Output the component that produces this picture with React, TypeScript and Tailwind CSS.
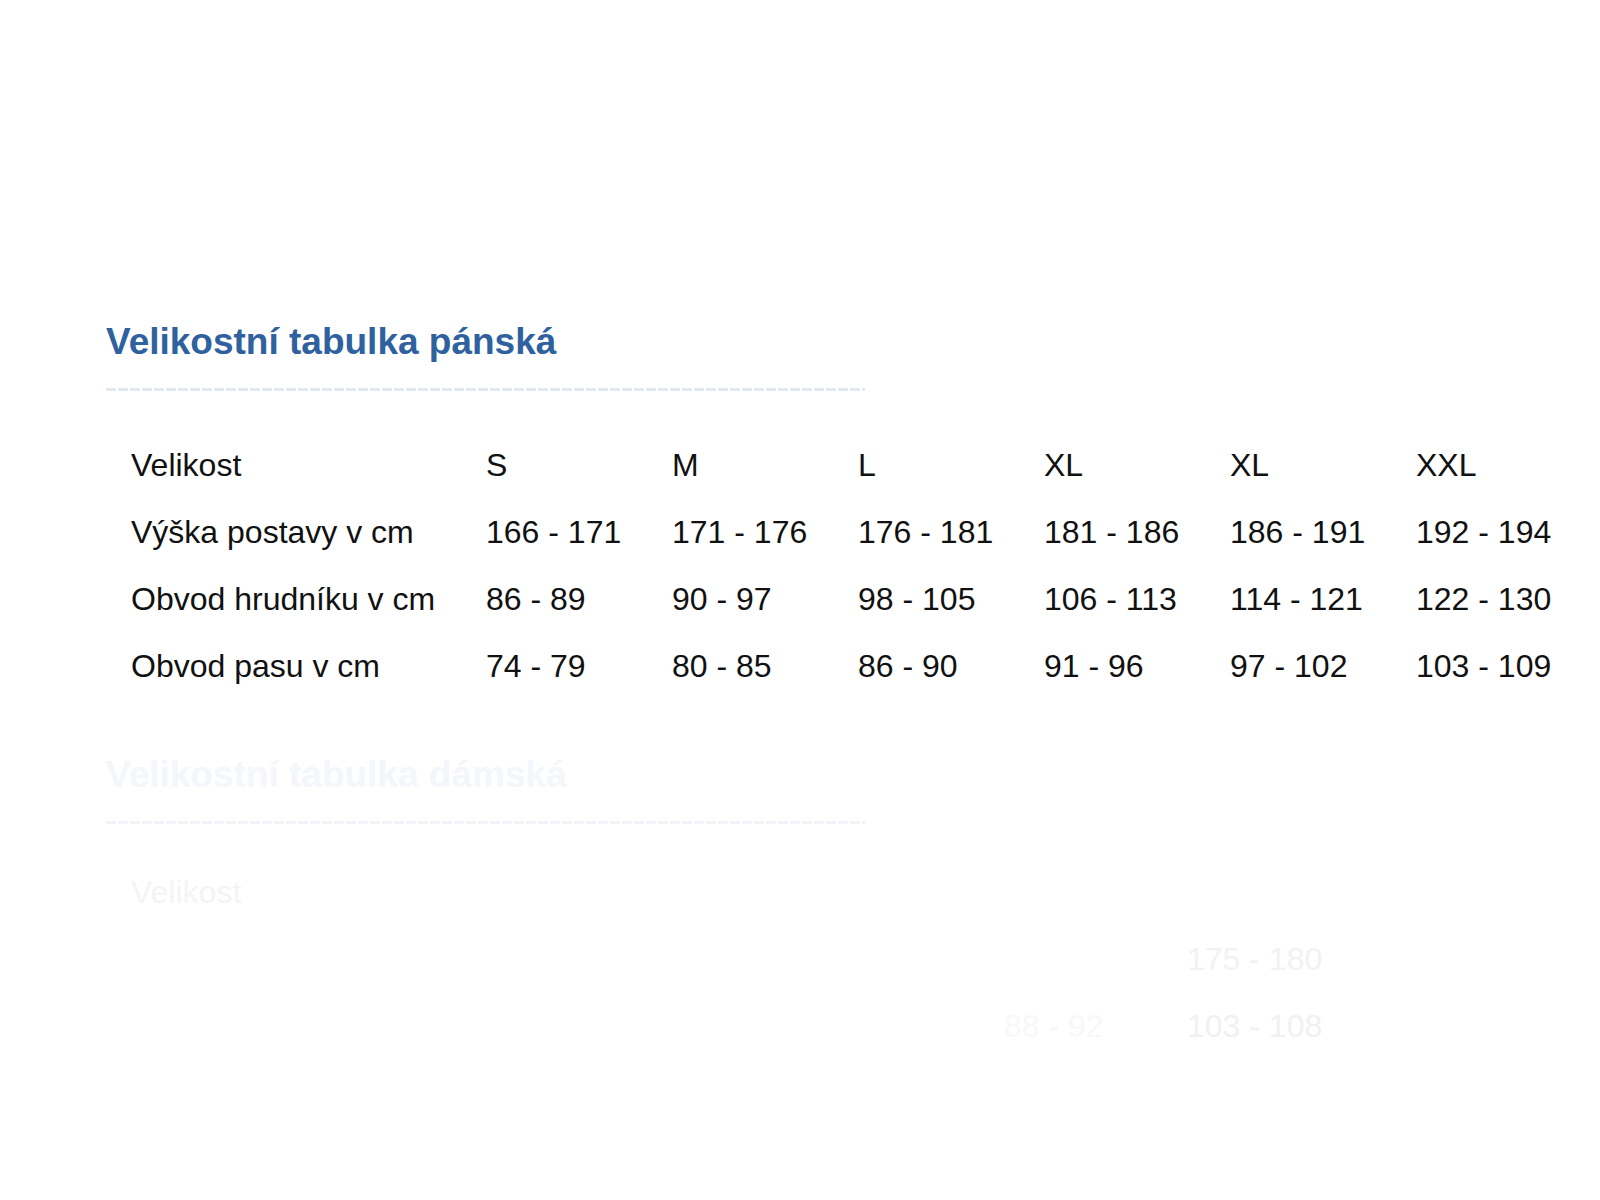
import React from 'react';

type Row = { label: string; values: string[] };

const menRows: Row[] = [
  { label: 'Velikost',            values: ['S', 'M', 'L', 'XL', 'XL', 'XXL'] },
  { label: 'Výška postavy v cm',  values: ['166 - 171', '171 - 176', '176 - 181', '181 - 186', '186 - 191', '192 - 194'] },
  { label: 'Obvod hrudníku v cm', values: ['86 - 89', '90 - 97', '98 - 105', '106 - 113', '114 - 121', '122 - 130'] },
  { label: 'Obvod pasu v cm',     values: ['74 - 79', '80 - 85', '86 - 90', '91 - 96', '97 - 102', '103 - 109'] },
];

// faded out section, only a few fragments show through
const womenRows: Row[] = [
  { label: 'Velikost',            values: ['XS', 'S', 'M', 'L', 'XL', 'XXL'] },
  { label: 'Výška postavy v cm',  values: ['155 - 160', '160 - 165', '165 - 170', '170 - 175', '175 - 180', '180 - 185'] },
  { label: 'Obvod hrudníku v cm', values: ['78 - 82', '82 - 86', '86 - 90', '88 - 92', '103 - 108', '98 - 102'] },
  { label: 'Obvod pasu v cm',     values: ['62 - 66', '66 - 70', '70 - 74', '74 - 80', '80 - 86', '86 - 92'] },
];

const faintCells: Record<string, string> = {
  '0-l': 'text-[#f4f4f4]',
  '1-4': 'text-[#f2f2f2]',
  '2-3': 'text-[#f8f8f8]',
  '2-4': 'text-[#f1f1f1]',
};

const Dashes = ({ faint }: { faint?: boolean }) => (
  <div
    className={
      faint
        ? 'h-[3px] w-[759px] bg-[repeating-linear-gradient(90deg,#f0f3f7_0_10px,transparent_10px_12px)]'
        : 'h-[3px] w-[759px] bg-[repeating-linear-gradient(90deg,#e2e8f0_0_10px,transparent_10px_12px)]'
    }
  />
);

export default function App() {
  return (
    <div className="min-h-screen w-full overflow-hidden bg-white font-['Liberation_Sans',Arial,sans-serif]">
      <div className="pl-[106px] pt-[320px]">
        <h2 className="text-[37px] font-bold leading-[44px] text-[#30619f]">Velikostní tabulka pánská</h2>
        <div className="mt-[24px]">
          <Dashes />
        </div>

        <div className="ml-[25px] mt-[40px]">
          {menRows.map(row => (
            <div key={row.label} className="grid h-[67px] grid-cols-[355px_repeat(6,186px)] items-center text-[32px] text-[#111]">
              <span>{row.label}</span>
              {row.values.map((v, i) => (
                <span key={i} className="whitespace-nowrap">{v}</span>
              ))}
            </div>
          ))}
        </div>

        <h2 className="mt-[54px] text-[37px] font-bold leading-[44px] text-[#f3f6fa]">Velikostní tabulka dámská</h2>
        <div className="mt-[24px]">
          <Dashes faint />
        </div>

        <div className="ml-[25px] mt-[34px]">
          {womenRows.map((row, r) => (
            <div key={row.label} className="grid h-[67px] grid-cols-[355px_152px_repeat(5,183px)] items-center text-[32px] text-white">
              <span className={faintCells[`${r}-l`] ?? ''}>{row.label}</span>
              {row.values.map((v, i) => (
                <span key={i} className={`whitespace-nowrap ${faintCells[`${r}-${i}`] ?? ''}`}>{v}</span>
              ))}
            </div>
          ))}
        </div>
      </div>
    </div>
  );
}
